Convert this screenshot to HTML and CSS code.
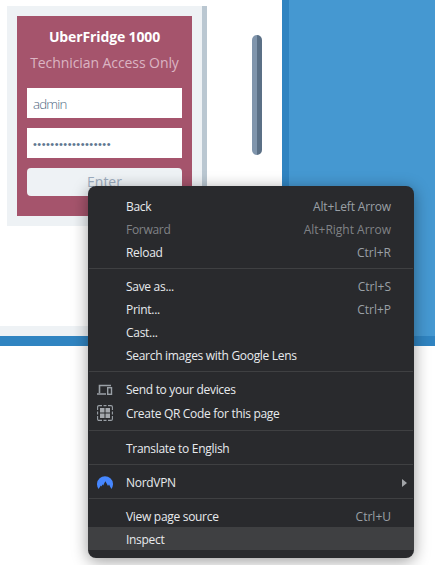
FILE: index.html
```
<!DOCTYPE html>
<html lang="en">
<head>
<meta charset="utf-8">
<title>UberFridge 1000</title>
<link rel="stylesheet" href="styles.css">
</head>
<body>
<div class="fridge">
  <div class="door">
    <div class="panel">
      <div class="screen">
        <div class="title">UberFridge 1000</div>
        <div class="subtitle">Technician Access Only</div>
        <div class="field user">admin</div>
        <div class="field pass">••••••••••••••••••</div>
        <div class="enter">Enter</div>
      </div>
    </div>
    <div class="handle"></div>
  </div>
  <div class="side"></div>
</div>
<div class="menu">
  <div class="item"><span>Back</span><span class="key arrow-key">Alt+Left Arrow</span></div>
  <div class="item disabled"><span>Forward</span><span class="key">Alt+Right Arrow</span></div>
  <div class="item"><span>Reload</span><span class="key">Ctrl+R</span></div>
  <div class="sep"></div>
  <div class="item"><span>Save as...</span><span class="key">Ctrl+S</span></div>
  <div class="item"><span>Print...</span><span class="key">Ctrl+P</span></div>
  <div class="item"><span>Cast...</span></div>
  <div class="item"><span>Search images with Google Lens</span></div>
  <div class="sep"></div>
  <div class="item">
    <svg class="icon" viewBox="0 0 16 16"><path d="M2.5 11V3.5H14M0 12H9" fill="none" stroke="#9aa0a6" stroke-width="1.6"/><rect x="10.7" y="5.7" width="3.8" height="6.6" fill="none" stroke="#9aa0a6" stroke-width="1.4"/></svg>
    <span>Send to your devices</span></div>
  <div class="item qr">
    <svg class="icon" viewBox="0 0 16 16"><path d="M.6 5V2Q.6.6 2 .6H5M6.5.6H9.5M11 .6H14Q15.4.6 15.4 2V5M15.4 6.5V9.5M15.4 11V14Q15.4 15.4 14 15.4H11M9.5 15.4H6.5M5 15.4H2Q.6 15.4.6 14V11M.6 9.5V6.5" fill="none" stroke="#9aa0a6" stroke-width="1.1"/><path d="M3 3H7.5V7.5H3ZM8.5 3H13V7.5H8.5ZM3 8.5H7.5V13H3ZM8.5 8.5H13V13H8.5Z" fill="#a4a8ad"/></svg>
    <span>Create QR Code for this page</span></div>
  <div class="sep low"></div>
  <div class="item"><span>Translate to English</span></div>
  <div class="sep"></div>
  <div class="item">
    <svg class="icon" viewBox="0 0 16 16"><path d="M1.6 14A8 8 0 1 1 14.4 14L12 9.5L11 11L8.4 6.3L6.6 9.6L7 10.6L5.6 9.6L4.4 11.5L3.8 10.4Z" fill="#4687ff"/></svg>
    <span>NordVPN</span>
    <svg class="arrow" viewBox="0 0 5 8"><path d="M0 0L5 4L0 8Z" fill="#a2a5a8"/></svg></div>
  <div class="sep last"></div>
  <div class="item dev"><span>View page source</span><span class="key">Ctrl+U</span></div>
  <div class="item dev active"><span>Inspect</span></div>
</div>
</body>
</html>
```
FILE: styles.css
```
* { box-sizing: border-box; }
body {
  margin: 0;
  height: 565px;
  overflow: hidden;
  background: #fff;
  font-family: "Open Sans", sans-serif;
}
.fridge {
  display: flex;
  height: 346px;
  border-bottom: 10px solid #3084c1;
}
.door {
  display: flex;
  width: 282px;
  padding: 6px 0 0 7px;
  border-bottom: 10px solid #eef2f5;
}
.panel {
  width: 200px;
  height: 220px;
  padding: 10px;
  background: #eef2f5;
  border-right: 5px solid #bac7d1;
}
.screen {
  height: 200px;
  padding: 11px 10px 0;
  background: #a5546c;
  text-align: center;
  font-size: 14px;
  line-height: 20px;
}
.title { color: #fff; font-weight: 700; letter-spacing: -.13px; }
.subtitle { margin: 6px -10px 15px; color: #dbb4c3; letter-spacing: -.08px; }
.field {
  height: 30px;
  margin-bottom: 10px;
  padding-left: 6px;
  background: #fff;
  color: #5f7892;
  text-align: left;
  line-height: 32px;
  font-size: 13.33px;
  font-weight: 300;
}
.user { letter-spacing: -.85px; color: #4f6882; }
.pass {
  font-family: "Liberation Sans", sans-serif;
  font-size: 11px;
  letter-spacing: .48px;
  line-height: 33px;
  font-weight: 400;
}
.enter {
  height: 28px;
  border-radius: 4px;
  background: #eef2f5;
  color: #9cacbe;
  line-height: 28px;
}
.handle {
  width: 10px;
  height: 120px;
  margin: 29px 0 0 45px;
  border-radius: 5px;
  background: linear-gradient(90deg, #8095ac 50%, #5b7086 50%);
}
.side {
  flex: 1;
  background: #4598d1;
  border-left: 7px solid #3084c1;
}
.menu {
  position: absolute;
  left: 88px;
  top: 186px;
  width: 326px;
  height: 372px;
  padding: 9px 0 8px;
  border-radius: 8px;
  overflow: hidden;
  background: #292a2d;
  color: #e8eaed;
  font-size: 12px;
  letter-spacing: -.3px;
  box-shadow: 0 3px 16px rgba(0, 0, 0, .4);
}
.item {
  position: relative;
  display: flex;
  justify-content: space-between;
  align-items: center;
  height: 23px;
  padding: 0 23px 0 38px;
  white-space: nowrap;
}
.key { color: #9aa0a6; letter-spacing: 0; }
.arrow-key { letter-spacing: -.15px; }
.disabled, .disabled .key { color: #808286; }
.sep {
  height: 1px;
  margin: 4px 1px 6px;
  background: #3f4042;
}
.sep.low { margin-top: 5px; }
.sep.last { margin-bottom: 5px; }
.qr { height: 24px; }
.dev { padding-top: 2px; }
.active { background: #3f4042; }
.icon {
  position: absolute;
  left: 9px;
  top: 4px;
  width: 16px;
  height: 16px;
}
.arrow {
  width: 5px;
  height: 8px;
  margin-right: -16px;
}
```
